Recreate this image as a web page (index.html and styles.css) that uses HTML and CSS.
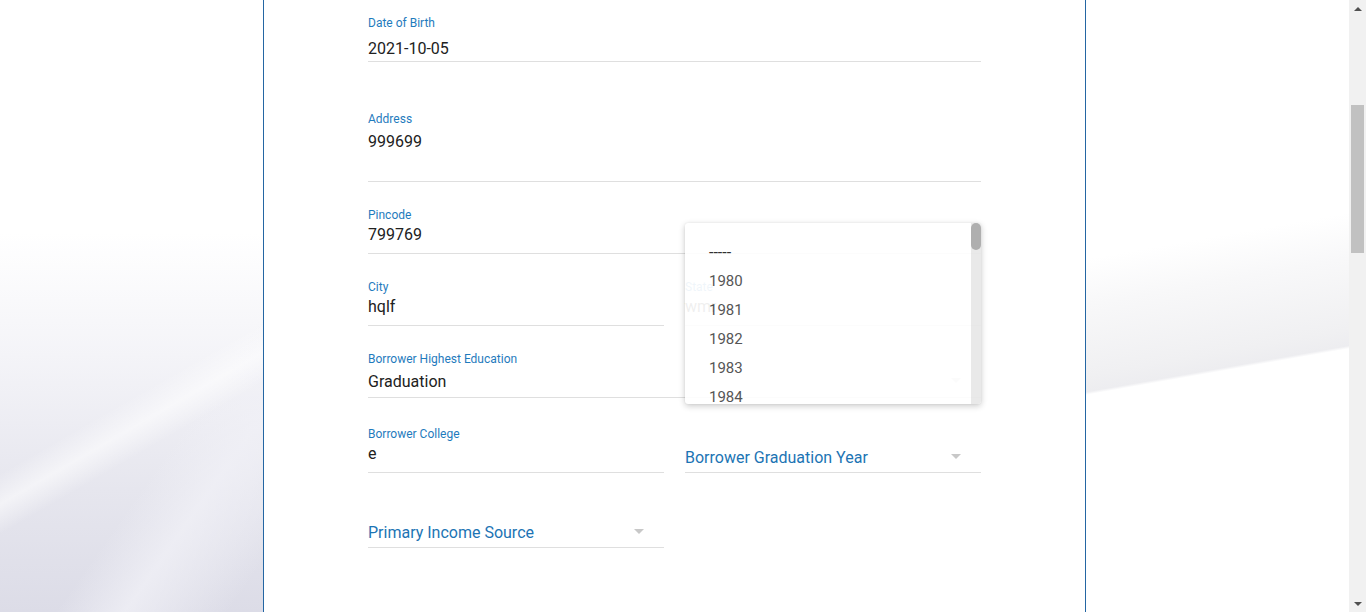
FILE: index.html
```html
<!DOCTYPE html>
<html lang="en">
<head>
<meta charset="utf-8">
<title>Borrower Details</title>
<link rel="stylesheet" href="styles.css">
</head>
<body>
<div class="page">
  <div class="bg bg-left"></div>
  <main class="card">
    <form class="form">
      <div class="field f-dob">
        <span class="lbl">Date of Birth</span>
        <span class="val">2021-10-05</span>
      </div>
      <div class="field f-address">
        <span class="lbl">Address</span>
        <span class="val">999699</span>
      </div>
      <div class="field f-text gap25">
        <span class="lbl">Pincode</span>
        <span class="val">799769</span>
      </div>
      <div class="row gap25">
        <div class="field f-text">
          <span class="lbl">City</span>
          <span class="val">hqlf</span>
        </div>
        <div class="field f-text">
          <span class="lbl">State</span>
          <span class="val">wmr</span>
        </div>
      </div>
      <div class="field f-select gap25">
        <span class="lbl">Borrower Highest Education</span>
        <span class="val sel"><span>Graduation</span><i class="caret"></i></span>
      </div>
      <div class="row gap28">
        <div class="field f-text">
          <span class="lbl">Borrower College</span>
          <span class="val">e</span>
        </div>
        <div class="field f-empty">
          <span class="placeholder sel"><span>Borrower Graduation Year</span><i class="caret"></i></span>
        </div>
      </div>
      <div class="row gap28">
        <div class="field f-empty">
          <span class="placeholder sel"><span>Primary Income Source</span><i class="caret"></i></span>
        </div>
      </div>

      <div class="menu">
        <ul class="menu-list">
          <li class="opt opt-none">-----</li>
          <li class="opt">1980</li>
          <li class="opt">1981</li>
          <li class="opt">1982</li>
          <li class="opt">1983</li>
          <li class="opt">1984</li>
        </ul>
        <div class="menu-scroll"><div class="menu-thumb"></div></div>
      </div>
    </form>
  </main>
  <div class="bg bg-right"></div>
  <div class="scrollbar">
    <div class="sb-btn"><i class="sb-up"></i></div>
    <div class="sb-track"><div class="sb-thumb"></div></div>
    <div class="sb-btn"><i class="sb-down"></i></div>
  </div>
</div>
</body>
</html>
```

FILE: styles.css
```css
* { box-sizing: border-box; }
html, body { margin: 0; padding: 0; }
body {
  font-family: Roboto, "Liberation Sans", Arial, sans-serif;
  background: #fff;
  overflow: hidden;
}
.page {
  display: flex;
  height: 612px;
  width: 1366px;
}
.bg-left {
  width: 263px;
  flex: none;
  background:
    linear-gradient(150deg, rgba(255,255,255,0) 62%, rgba(255,255,255,0.55) 66%, rgba(255,255,255,0) 70%),
    linear-gradient(125deg, rgba(255,255,255,0) 70%, rgba(240,240,246,0.8) 80%, rgba(255,255,255,0) 95%),
    linear-gradient(to bottom, #ffffff 0%, #ffffff 38%, #f4f4f8 58%, #e6e6ee 80%, #dcdce7 100%);
}
.bg-right {
  flex: 1;
  background: linear-gradient(170deg, #ffffff 0px, #ffffff 255px, #f8f8f9 300px, #f0f0f2 370px, #ededf0 386px, #ffffff 389px, #ffffff 100%);
}
.card {
  width: 823px;
  flex: none;
  background: #fff;
  border-left: 1px solid #2466a3;
  border-right: 1px solid #2466a3;
  padding: 0 104px;
}
.form {
  position: relative;
  padding-top: 15px;
}
.field {
  display: flex;
  flex-direction: column;
  border-bottom: 1px solid #dfdfdf;
  padding-top: 1px;
}
.lbl {
  font-size: 12px;
  line-height: 14px;
  color: #1f7bbd;
}
.val {
  font-size: 16px;
  line-height: 20px;
  color: #212121;
}
.f-dob .val { padding: 9px 0 2px; }
.f-address { margin-top: 49px; }
.f-address .val { padding: 6px 0 29px; }
.f-text .val { padding: 3px 0 8px; }
.f-select .val { padding: 6px 0 5px; }
.gap25 { margin-top: 25px; }
.gap28 { margin-top: 28px; }
.row {
  display: grid;
  grid-template-columns: 296px 296px;
  column-gap: 21px;
}
.row > .field { margin-top: 0; }
.f-empty {
  height: 47px;
  justify-content: flex-end;
}
.placeholder {
  font-size: 16px;
  line-height: 20px;
  color: #1c74b4;
  padding-bottom: 4px;
}
.sel {
  display: flex;
  align-items: center;
  justify-content: space-between;
}
.caret {
  width: 0;
  height: 0;
  border-left: 5px solid transparent;
  border-right: 5px solid transparent;
  border-top: 5px solid #c8c8c8;
  margin-right: 20px;
  margin-top: -3px;
}
.menu {
  position: absolute;
  left: 317px;
  top: 223px;
  width: 296px;
  height: 181px;
  background: #fff;
  border-radius: 3px;
  box-shadow: 0 2px 6px rgba(0,0,0,0.22), 0 0 2px rgba(0,0,0,0.08);
  overflow: hidden;
  opacity: 0.93;
  display: flex;
}
.menu-list {
  list-style: none;
  margin: 0;
  padding: 15px 0 0;
  flex: 1;
}
.opt {
  font-size: 15px;
  line-height: 29px;
  height: 29px;
  padding-left: 24px;
  color: #4a4a4a;
}
.opt-none {
  font-size: 16px;
  color: #222;
}
.menu-scroll {
  width: 10px;
  background: #e8e8e8;
  flex: none;
}
.menu-thumb {
  height: 27px;
  background: #a9a9a9;
  border-radius: 5px;
}
.scrollbar {
  width: 17px;
  flex: none;
  background: #f1f1f1;
  display: flex;
  flex-direction: column;
}
.sb-btn {
  height: 17px;
  display: flex;
  align-items: center;
  justify-content: center;
}
.sb-up, .sb-down {
  width: 0;
  height: 0;
  border-left: 4px solid transparent;
  border-right: 4px solid transparent;
}
.sb-up { border-bottom: 4px solid #505050; }
.sb-down { border-top: 4px solid #505050; }
.sb-track {
  flex: 1;
  padding: 88px 2px 0;
}
.sb-thumb {
  height: 148px;
  background: #c1c1c1;
}
```
